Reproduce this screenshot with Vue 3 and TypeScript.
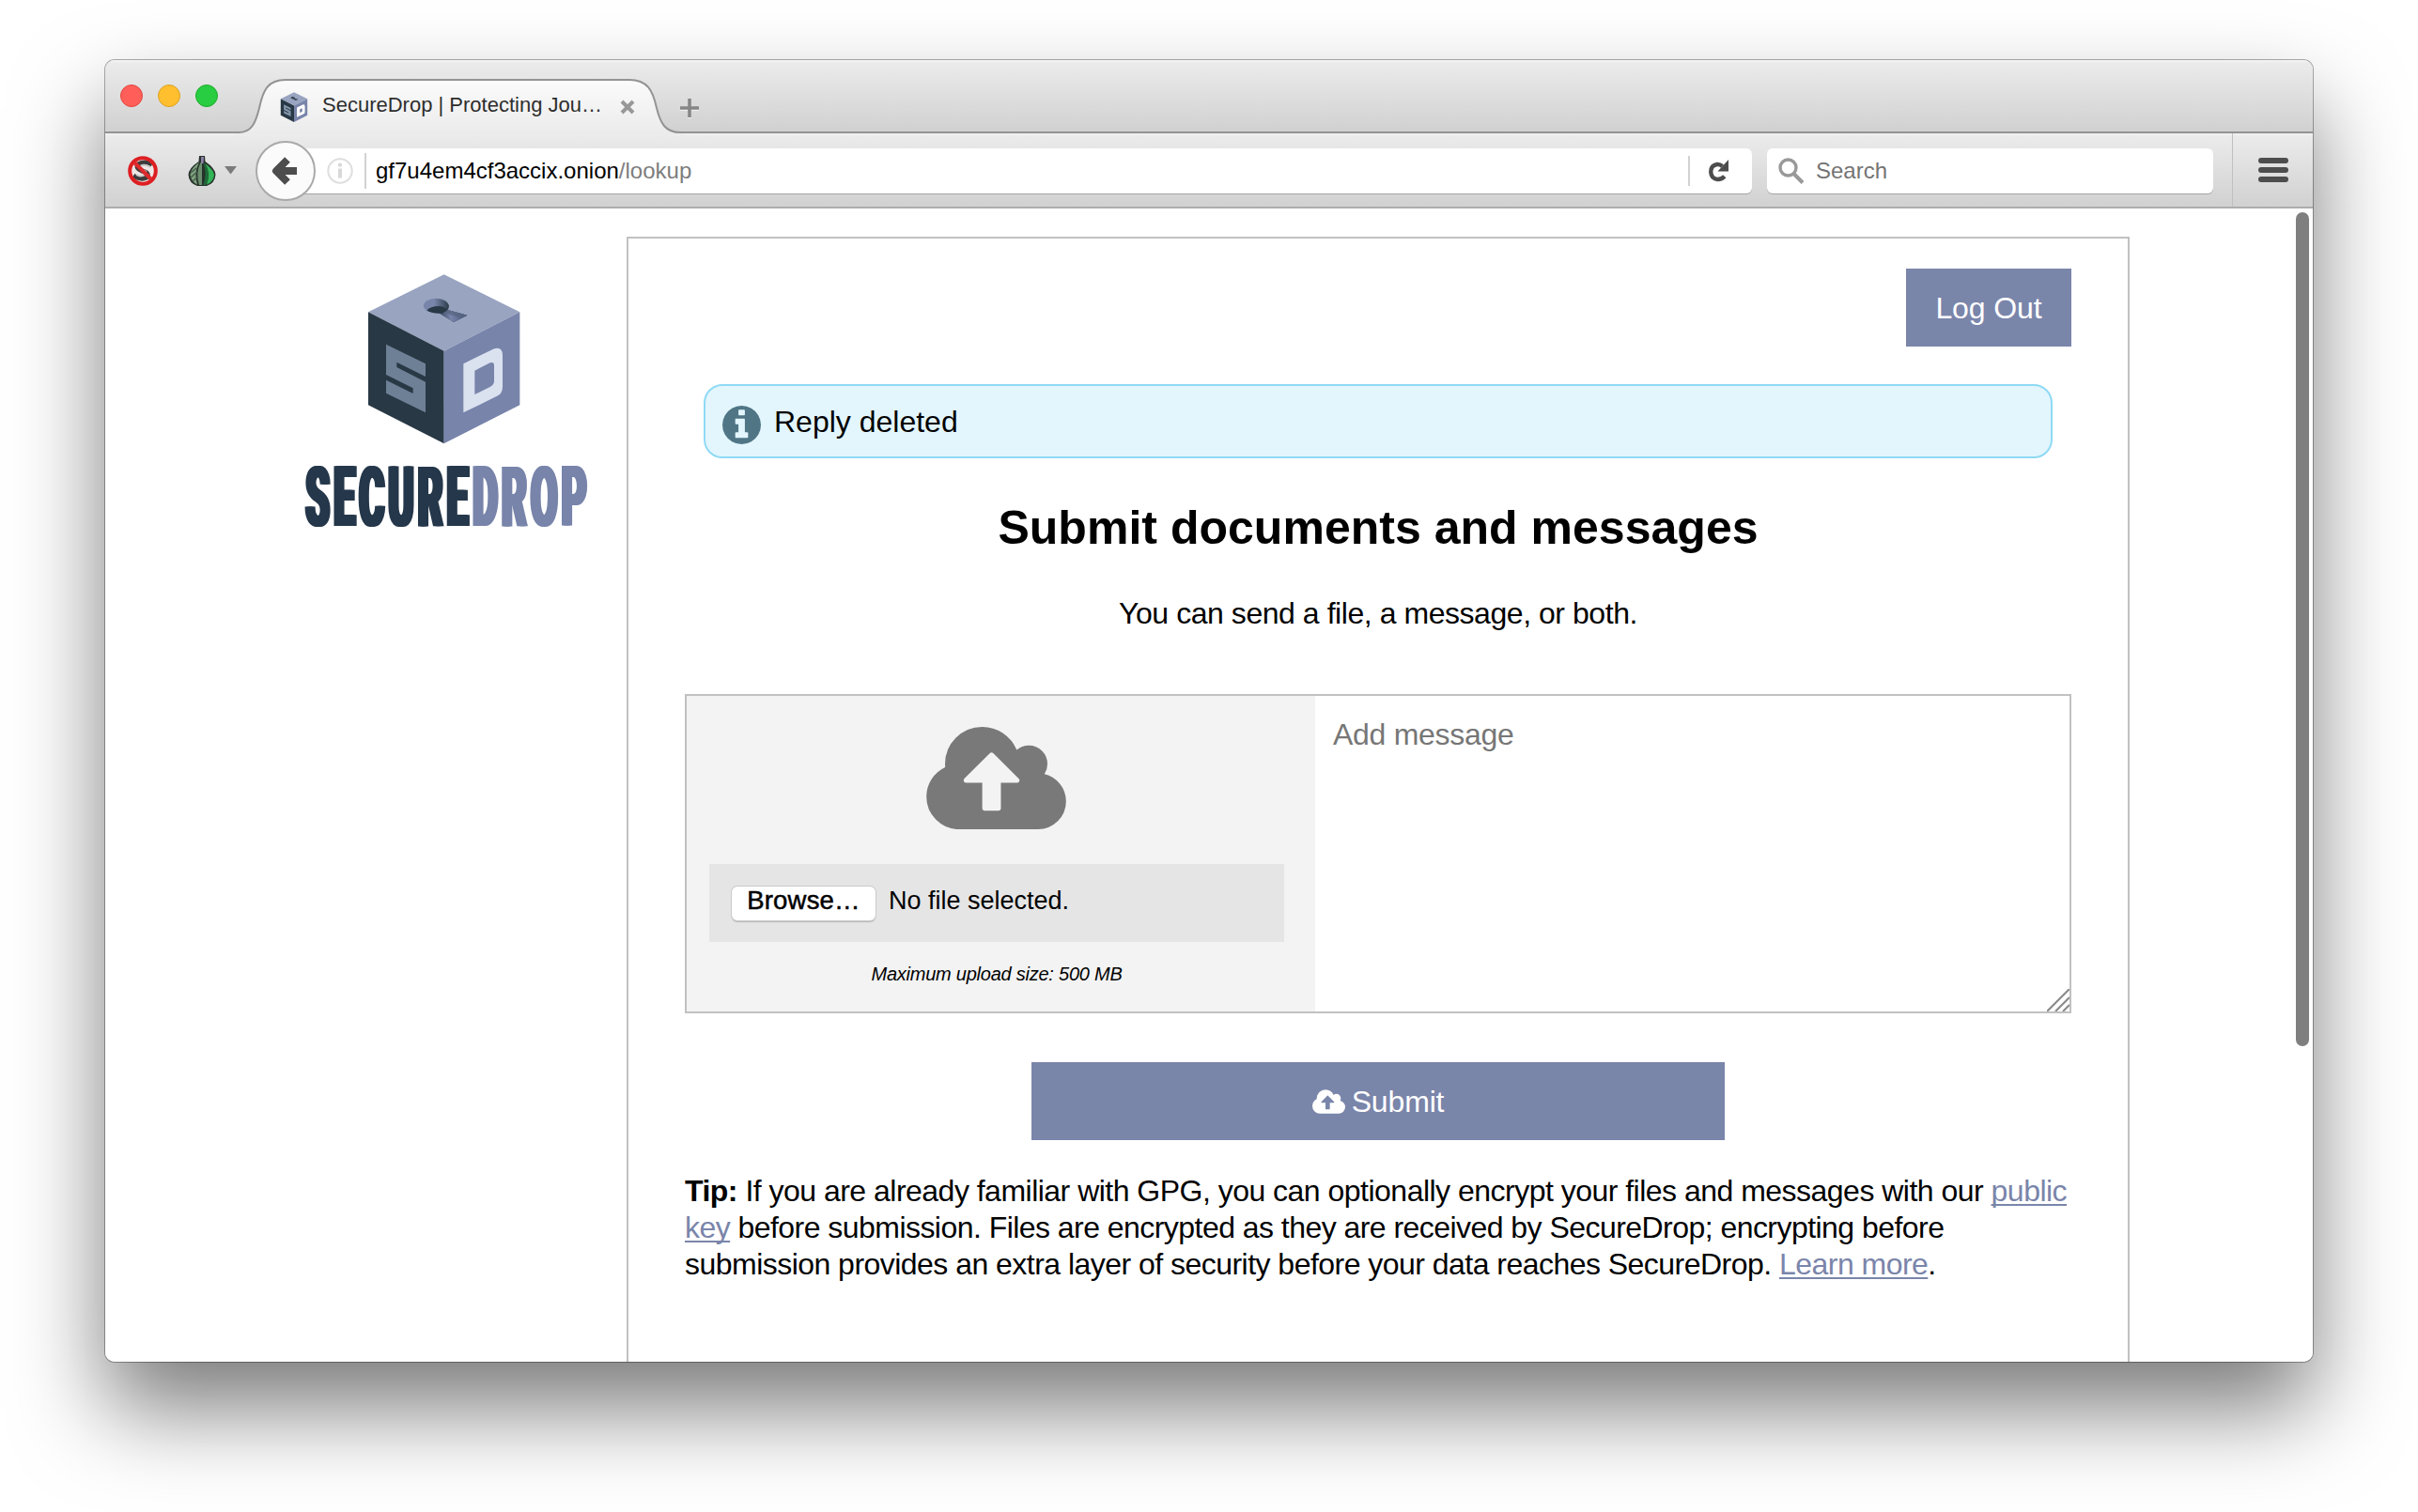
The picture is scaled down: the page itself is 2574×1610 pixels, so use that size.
<script setup lang="ts">
const trafficLights: string[] = ['close', 'minimise', 'zoom']

const cloudPath =
  'M1280 736q0-14-9-23l-352-352q-9-9-23-9t-23 9l-351 351q-10 12-10 24 0 14 9 23t23 9h224v352q0 13 9.5 22.5t22.5 9.5h192q13 0 22.5-9.5t9.5-22.5v-352h224q13 0 22.5-9.5t9.5-22.5zm640 288q0 159-112.5 271.5t-271.5 112.5h-1088q-185 0-316.5-131.5t-131.5-316.5q0-130 70-240t188-165q-2-30-2-43 0-212 150-362t362-150q156 0 285.5 87t188.5 231q71-62 166-62 106 0 181 75t75 181q0 76-41 138 130 31 213.5 135.5t83.5 238.5z'
const infoPath =
  'M1152 1376v-160q0-14-9-23t-23-9h-96v-512q0-14-9-23t-23-9h-320q-14 0-23 9t-9 23v160q0 14 9 23t23 9h96v320h-96q-14 0-23 9t-9 23v160q0 14 9 23t23 9h448q14 0 23-9t9-23zm-128-896v-160q0-14-9-23t-23-9h-192q-14 0-23 9t-9 23v160q0 14 9 23t23 9h192q14 0 23-9t9-23zm640 416q0 209-103 385.5t-279.5 279.5-385.5 103-385.5-103-279.5-279.5-103-385.5 103-385.5 279.5-279.5 385.5-103 385.5 103 279.5 279.5 103 385.5z'
</script>

<template>
  <main class="desktop">
    <section class="window">
      <header class="tabbar">
        <div class="lights">
          <span v-for="name in trafficLights" :key="name" class="light" :class="name"></span>
        </div>
        <div class="tab">
          <svg class="tab-shape" width="478" height="60" viewBox="0 0 478 60">
            <defs>
              <linearGradient id="tabFill" x1="0" y1="0" x2="0" y2="1">
                <stop offset="0" stop-color="#fbfbfb" />
                <stop offset="1" stop-color="#ebebeb" />
              </linearGradient>
            </defs>
            <path d="M0 60V57H4C18 57 22 47 26 31C30 12 35 1 54 1H420C439 1 445 12 449 31C453 47 458 57 474 57H478V60Z" fill="url(#tabFill)" />
            <path d="M0 57H4C18 57 22 47 26 31C30 12 35 1 54 1H420C439 1 445 12 449 31C453 47 458 57 474 57H478" fill="none" stroke="#939393" stroke-width="2" />
          </svg>
          <svg class="favicon" width="30" height="32" viewBox="275 64 486 545">
            <path d="M518 67L760 187L518 311L276 187Z" fill="#98a4c0" />
            <path d="M276 187L518 311V607L276 484Z" fill="#283845" />
            <path d="M760 187L518 311V607L760 484Z" fill="#7884aa" />
            <path d="M333 290L459 352V393L367 347V363L459 410V508L333 446V404L419 447V430L333 387Z" fill="#8397ab" />
            <path fill-rule="evenodd" d="M570 345L685 290Q715 285 715 325V425Q715 450 695 460L570 518ZM622 380V440L655 424Q668 417 668 408V366Q668 354 655 362Z" fill="#fff" />
            <path d="M455 165Q490 130 535 165L530 180L592 197L549 219L505 190Q470 190 455 165Z" fill="#34414f" />
          </svg>
          <span class="tab-title">SecureDrop | Protecting Jou…</span>
          <svg class="tab-close" width="16" height="16" viewBox="0 0 16 16">
            <path d="M2 2L14 14M14 2L2 14" stroke="#989898" stroke-width="4" />
          </svg>
        </div>
        <svg class="new-tab" width="22" height="22" viewBox="0 0 22 22">
          <path d="M11 1V21M1 11H21" stroke="#fff" stroke-width="4" transform="translate(0 1)" opacity=".6" />
          <path d="M11 1V21M1 11H21" stroke="#868686" stroke-width="3.6" />
        </svg>
      </header>

      <nav class="toolbar">
        <svg class="noscript" width="32" height="32" viewBox="0 0 32 32">
          <circle cx="16" cy="16" r="14" fill="#efe6e6" />
          <path d="M26 9Q18 5 11 9Q8 13 15 16Q24 18 20 23Q14 26 6 21" fill="none" stroke="#3c3c3c" stroke-width="5" />
          <path d="M13 11Q18 8 24 12M9 20Q14 23 18 20M14 14L20 17" fill="none" stroke="#c9c9c9" stroke-width="2" />
          <circle cx="16" cy="16" r="13.800" fill="none" stroke="#dd1f22" stroke-width="4" />
          <path d="M7 7L25 25" stroke="#dd2a2c" stroke-width="4.200" />
        </svg>
        <svg class="onion" width="30" height="32" viewBox="0 0 30 32">
          <path d="M12 0H18L18.500 6Q29 13 29.500 20Q29 29 20 32H10Q1 29 .5 20Q1 13 11.500 6Z" fill="#28322c" />
          <path d="M12 7Q3 13 2.500 20Q3 27 10 30.500Q6 18 12 7Z" fill="#7ca07c" />
          <path d="M13.500 7Q8 18 12 31H15V7Z" fill="#6b8f6e" />
          <path d="M16 7Q21 18 16.500 31Q18 31 19 31Q26 18 16 7Z" fill="#1c6b38" />
          <path d="M18 8Q27 14 28 20Q28 27 20 30.500Q25 18 18 8Z" fill="#32b457" />
          <path d="M14 1H17L16.500 8H14Z" fill="#8d81a8" />
          <path d="M3 18L9 13M3 23L10 17M5 27L11 22" stroke="#45584a" stroke-width="1.300" />
        </svg>
        <svg class="caret" width="13" height="9" viewBox="0 0 13 9">
          <path d="M0 0H13L6.500 8.500Z" fill="#7b7b7b" />
        </svg>
        <div class="back">
          <svg width="30" height="32" viewBox="0 0 30 32">
            <path d="M17 4L5 16L17 28M6 16H27" fill="none" stroke="#4d4d4d" stroke-width="8" stroke-linejoin="round" />
          </svg>
        </div>
        <div class="urlbar">
          <svg width="28" height="28" viewBox="0 0 28 28">
            <circle cx="14" cy="14" r="12.700" fill="none" stroke="#dedede" stroke-width="2" />
            <path d="M14 11.500V21.500" stroke="#d8d8d8" stroke-width="4" />
            <circle cx="14" cy="7.600" r="2.200" fill="#d8d8d8" />
          </svg>
          <span class="rule tall"></span>
          <span class="url">gf7u4em4cf3accix.onion<span class="path">/lookup</span></span>
          <span class="rule short"></span>
          <svg class="reload" width="24" height="26" viewBox="0 0 24 26">
            <path d="M16.500 8Q14 5.800 10.800 6Q4.200 7 4.200 14.200Q4.700 21.700 11.500 22Q16 22 18.800 18.800" fill="none" stroke="#4d4d4d" stroke-width="4.400" />
            <path d="M23 1V13.500H11.500Z" fill="#4d4d4d" />
          </svg>
        </div>
        <div class="search">
          <svg width="28" height="28" viewBox="0 0 28 28">
            <circle cx="10.500" cy="10.500" r="8.500" fill="none" stroke="#999" stroke-width="3.400" />
            <path d="M16.500 17L26 26.500" stroke="#999" stroke-width="4" />
          </svg>
          <span>Search</span>
        </div>
        <div class="menu">
          <span class="bar"></span>
          <span class="bar"></span>
          <span class="bar"></span>
        </div>
      </nav>

      <div class="page">
        <svg class="logo" width="360" height="330" viewBox="0 0 1080 990">
          <defs>
            <linearGradient id="holeWall" x1="0" x2="1">
              <stop offset="0.25" stop-color="#7884aa" />
              <stop offset="0.6" stop-color="#283845" />
            </linearGradient>
            <linearGradient id="slotWall" x1="0" x2="1">
              <stop offset="0" stop-color="#3a4760" />
              <stop offset="0.4" stop-color="#7884aa" />
              <stop offset="1" stop-color="#4c5878" />
            </linearGradient>
            <!-- Thickens the vertical stems only -->
            <filter id="stems" x="-5%" y="-5%" width="110%" height="110%" color-interpolation-filters="sRGB">
              <feOffset in="SourceGraphic" dx="-5" result="left" />
              <feOffset in="SourceGraphic" dx="5" result="right" />
              <feMerge>
                <feMergeNode in="left" />
                <feMergeNode in="right" />
                <feMergeNode in="SourceGraphic" />
              </feMerge>
            </filter>
          </defs>
          <path d="M518 67L760 187L518 311L276 187Z" fill="#98a4c0" />
          <path d="M276 187L518 311V607L276 484Z" fill="#283845" />
          <path d="M760 187L518 311V607L760 484Z" fill="#7884aa" />
          <path d="M333 290L459 352V393L367 347V363L459 410V508L333 446V404L419 447V430L333 387Z" fill="#6e8096" />
          <path fill-rule="evenodd" d="M580 352L675 305Q705 295 705 325V425Q705 445 690 454L580 508ZM616 374V450L665 426Q678 419 678 408V358Q678 344 665 349Z" fill="#dae1ef" />
          <path d="M452 166Q455 145 493 143Q530 146 534 166Q534 174 530 180L592 197L549 219L504 191Q456 190 452 166Z" fill="url(#holeWall)" />
          <path d="M530 180L592 197L549 219L504 191Q524 188 530 180Z" fill="url(#slotWall)" />
          <path d="M463 182Q475 168 500 168Q520 169 528 180L512 191Q480 192 463 182Z" fill="#283845" />
          <path d="M530 180L592 197L572 207L522 188Z" fill="#56627f" opacity=".7" />
          <g filter="url(#stems)">
            <text class="wordmark dark" x="76" y="869" textLength="532" lengthAdjust="spacingAndGlyphs">SECURE</text>
            <text class="wordmark light" x="610" y="869" textLength="376" lengthAdjust="spacingAndGlyphs">DROP</text>
          </g>
        </svg>

        <article class="panel">
          <button class="logout" type="button">Log Out</button>
          <div class="flash">
            <svg width="41" height="41" viewBox="128 128 1536 1536"><path :d="infoPath" fill="#507686" /></svg>
            <span>Reply deleted</span>
          </div>
          <h1>Submit documents and messages</h1>
          <p class="lead">You can send a file, a message, or both.</p>
          <form class="compose">
            <div class="upload">
              <svg class="cloud" width="149" height="109" viewBox="0 0 1920 1408"><path :d="cloudPath" fill="#797979" /></svg>
              <div class="file-row">
                <span class="browse">Browse…</span>
                <span class="file-name">No file selected.</span>
              </div>
              <em>Maximum upload size: 500 MB</em>
            </div>
            <div class="message">
              <span>Add message</span>
              <svg class="grip" width="24" height="24" viewBox="0 0 24 24">
                <path d="M0 24L24 0M9 24L24 9M17 24L24 17" stroke="#8c8c8c" stroke-width="2.200" />
              </svg>
            </div>
          </form>
          <button class="submit" type="button">
            <svg width="35" height="26" viewBox="0 0 1920 1408"><path :d="cloudPath" fill="#fff" /></svg>
            <span>Submit</span>
          </button>
          <p class="tip">
            <span class="l1"><strong>Tip:</strong> If you are already familiar with GPG, you can optionally encrypt your files and messages with our <a>public</a></span>
            <span class="l2"><a>key</a> before submission. Files are encrypted as they are received by SecureDrop; encrypting before</span>
            <span class="l3">submission provides an extra layer of security before your data reaches SecureDrop. <a>Learn more</a>.</span>
          </p>
        </article>
        <span class="scrollbar"></span>
      </div>
    </section>
  </main>
</template>

<style>
body {
  background: #fff;
  overflow: hidden;
}
</style>

<style scoped>
.desktop {
  box-sizing: border-box;
  width: 2574px;
  height: 1610px;
  padding: 64px 112px 0;
  overflow: hidden;
  font-family: "Liberation Sans", Arial, sans-serif;
  color: #000;
}
.desktop * { box-sizing: border-box; }
svg { display: block; flex: none; }
.window {
  width: 2350px;
  height: 1386px;
  border-radius: 10px;
  box-shadow: 0 0 0 1px rgba(0, 0, 0, 0.32), 0 50px 96px rgba(0, 0, 0, 0.52);
  overflow: hidden;
  background: #fff;
}
.tabbar {
  display: flex;
  height: 78px;
  background: linear-gradient(#f6f6f6 0, #ebebeb 3px, #d1d1d1 75px);
  border-bottom: 2px solid #939393;
}
.lights {
  display: flex;
  gap: 16px;
  width: 138px;
  padding: 26px 0 0 16px;
}
.light { width: 24px; height: 24px; border-radius: 50%; border: 1px solid; }
.light.close { background: #ff5f58; border-color: #e2463f; }
.light.minimise { background: #ffbf2f; border-color: #e0a023; }
.light.zoom { background: #28cd41; border-color: #1dad2b; }
.tab {
  position: relative;
  display: flex;
  align-items: center;
  width: 478px;
  height: 58px;
  margin-top: 20px;
  padding: 2px 0 0 48px;
}
.tab-shape { position: absolute; left: 0; top: 0; }
.favicon { position: relative; }
.tab-title {
  position: relative;
  margin-left: 15px;
  width: 306px;
  font-size: 22px;
  line-height: 28px;
  padding-bottom: 4px;
  color: #2e2e2e;
  white-space: nowrap;
}
.tab-close { position: relative; margin-left: 11px; }
.new-tab { margin: 40px 0 0 -5px; position: relative; }
.toolbar {
  display: flex;
  align-items: center;
  height: 80px;
  background: linear-gradient(#f2f2f2 0, #ebebeb 3px, #d1d1d1 78px);
  border-bottom: 2px solid #adadad;
}
.noscript { margin: 2px 0 0 24px; }
.onion { margin: 2px 0 0 32px; }
.caret { margin: 0 0 0 9px; }
.back {
  display: flex;
  align-items: center;
  justify-content: center;
  position: relative;
  width: 64px;
  height: 64px;
  margin: 2px -32px 0 20px;
  border: 2px solid #a9a9a9;
  border-radius: 50%;
  background: #fbfbfb;
  flex: none;
}
.back svg { margin-right: 1px; }
.urlbar {
  display: flex;
  align-items: center;
  width: 1561px;
  height: 48px;
  margin-top: 2px;
  padding: 0 24px 0 44px;
  border-radius: 0 6px 6px 0;
  background: #fff;
  box-shadow: 0 1px 0 #a5a5a5;
}
.rule { width: 2px; background: #d2d2d2; flex: none; }
.rule.tall { height: 38px; margin-left: 12px; }
.rule.short { height: 32px; margin-left: auto; }
.url {
  margin-left: 10px;
  padding-bottom: 1px;
  font-size: 24px;
  line-height: 30px;
}
.path { color: #7d7d7d; }
.reload { margin-left: 18px; }
.search {
  display: flex;
  align-items: center;
  gap: 12px;
  width: 475px;
  height: 48px;
  margin: 2px 0 0 16px;
  padding-left: 12px;
  border-radius: 6px;
  background: #fff;
  box-shadow: 0 1px 0 #a5a5a5;
  font-size: 24px;
  line-height: 30px;
  color: #747474;
}
.search span { padding-bottom: 1px; }
.menu {
  display: flex;
  flex-direction: column;
  justify-content: center;
  gap: 4px;
  height: 78px;
  margin-left: 20px;
  padding: 0 0 0 27px;
  border-left: 1px solid #c0c0c0;
}
.bar { width: 32px; height: 6px; border-radius: 3px; background: #4d4d4d; }
.page {
  position: relative;
  display: flex;
  align-items: flex-start;
  height: 1228px;
  background: #fff;
}
.logo { margin: 48px 0 0 188px; }
.wordmark {
  font-family: Roboto, "Liberation Sans", sans-serif;
  font-weight: 900;
  font-size: 268px;
  letter-spacing: 26px;
}
.wordmark.dark { fill: #25374a; }
.wordmark.light { fill: #7884aa; }
.panel {
  display: flex;
  flex-direction: column;
  width: 1600px;
  height: 1198px;
  margin: 30px 0 0 7px;
  padding: 32px 60px 0;
  border: 2px solid #c1c1c1;
  border-bottom: 0;
}
button {
  border: 0;
  margin: 0;
  padding: 0;
  background: #7a85aa;
  color: #fff;
  font: 32px/38px "Liberation Sans", Arial, sans-serif;
}
.logout { align-self: flex-end; width: 176px; height: 83px; letter-spacing: -0.1px; }
.flash {
  display: flex;
  align-items: center;
  height: 79px;
  margin: 40px 20px 0;
  padding: 0 0 0 18px;
  border: 2px solid #8fdaf5;
  border-radius: 20px;
  background: #e3f6fd;
  font-size: 32px;
  line-height: 38px;
}
.flash svg { margin-top: 8px; }
.flash span { margin: 0 0 0 14px; }
h1 {
  margin: 44px 0 0;
  text-align: center;
  font-size: 50px;
  line-height: 60px;
  font-weight: 700;
  letter-spacing: 0.02px;
}
.lead {
  margin: 41px 0 0;
  text-align: center;
  font-size: 32px;
  line-height: 40px;
  letter-spacing: -0.45px;
}
.compose {
  display: flex;
  height: 340px;
  margin: 66px 0 0;
  border: 2px solid #c1c1c1;
}
.upload {
  display: flex;
  flex-direction: column;
  align-items: center;
  width: 669px;
  padding: 33px 33px 0 24px;
  background: #f3f3f3;
}
.cloud { margin-right: 2px; }
.file-row {
  display: flex;
  align-self: stretch;
  height: 83px;
  margin-top: 37px;
  padding: 24px 0 0 24px;
  background: #e5e5e5;
  font-size: 27px;
  line-height: 30px;
}
.browse {
  width: 153px;
  height: 36px;
  border-radius: 6px;
  background: #fff;
  box-shadow: 0 0 0 1px #cacaca, 0 2px 1px #b5b5b5;
  text-align: center;
  font-size: 27.500px;
  letter-spacing: 0.2px;
  -webkit-text-stroke: 0.5px #000;
}
.file-name { margin-left: 14px; }
em { margin-top: 22px; font-size: 20px; line-height: 24px; letter-spacing: -0.24px; }
.message {
  position: relative;
  flex: 1;
  padding: 22px 0 0 19px;
  font-size: 32px;
  line-height: 38px;
  letter-spacing: -0.3px;
  color: #767676;
}
.grip { position: absolute; right: 0; bottom: 0; }
.submit {
  display: flex;
  align-items: center;
  justify-content: center;
  gap: 7px;
  width: 738px;
  height: 83px;
  margin: 52px 0 0 369px;
  letter-spacing: -0.15px;
}
.tip {
  display: flex;
  flex-direction: column;
  margin: 35px 0 0;
  font-size: 32px;
  line-height: 39px;
  white-space: nowrap;
}
.l1 { letter-spacing: -0.515px; }
.l2 { letter-spacing: -0.545px; }
.l3 { letter-spacing: -0.53px; }
.tip a {
  color: #7a85aa;
  text-decoration: underline;
  text-decoration-thickness: 2px;
  text-underline-offset: 3px;
  text-decoration-skip-ink: none;
}
.scrollbar {
  position: absolute;
  left: 2332px;
  top: 4px;
  width: 14px;
  height: 888px;
  border-radius: 7px;
  background: #7f7f7f;
}
</style>
